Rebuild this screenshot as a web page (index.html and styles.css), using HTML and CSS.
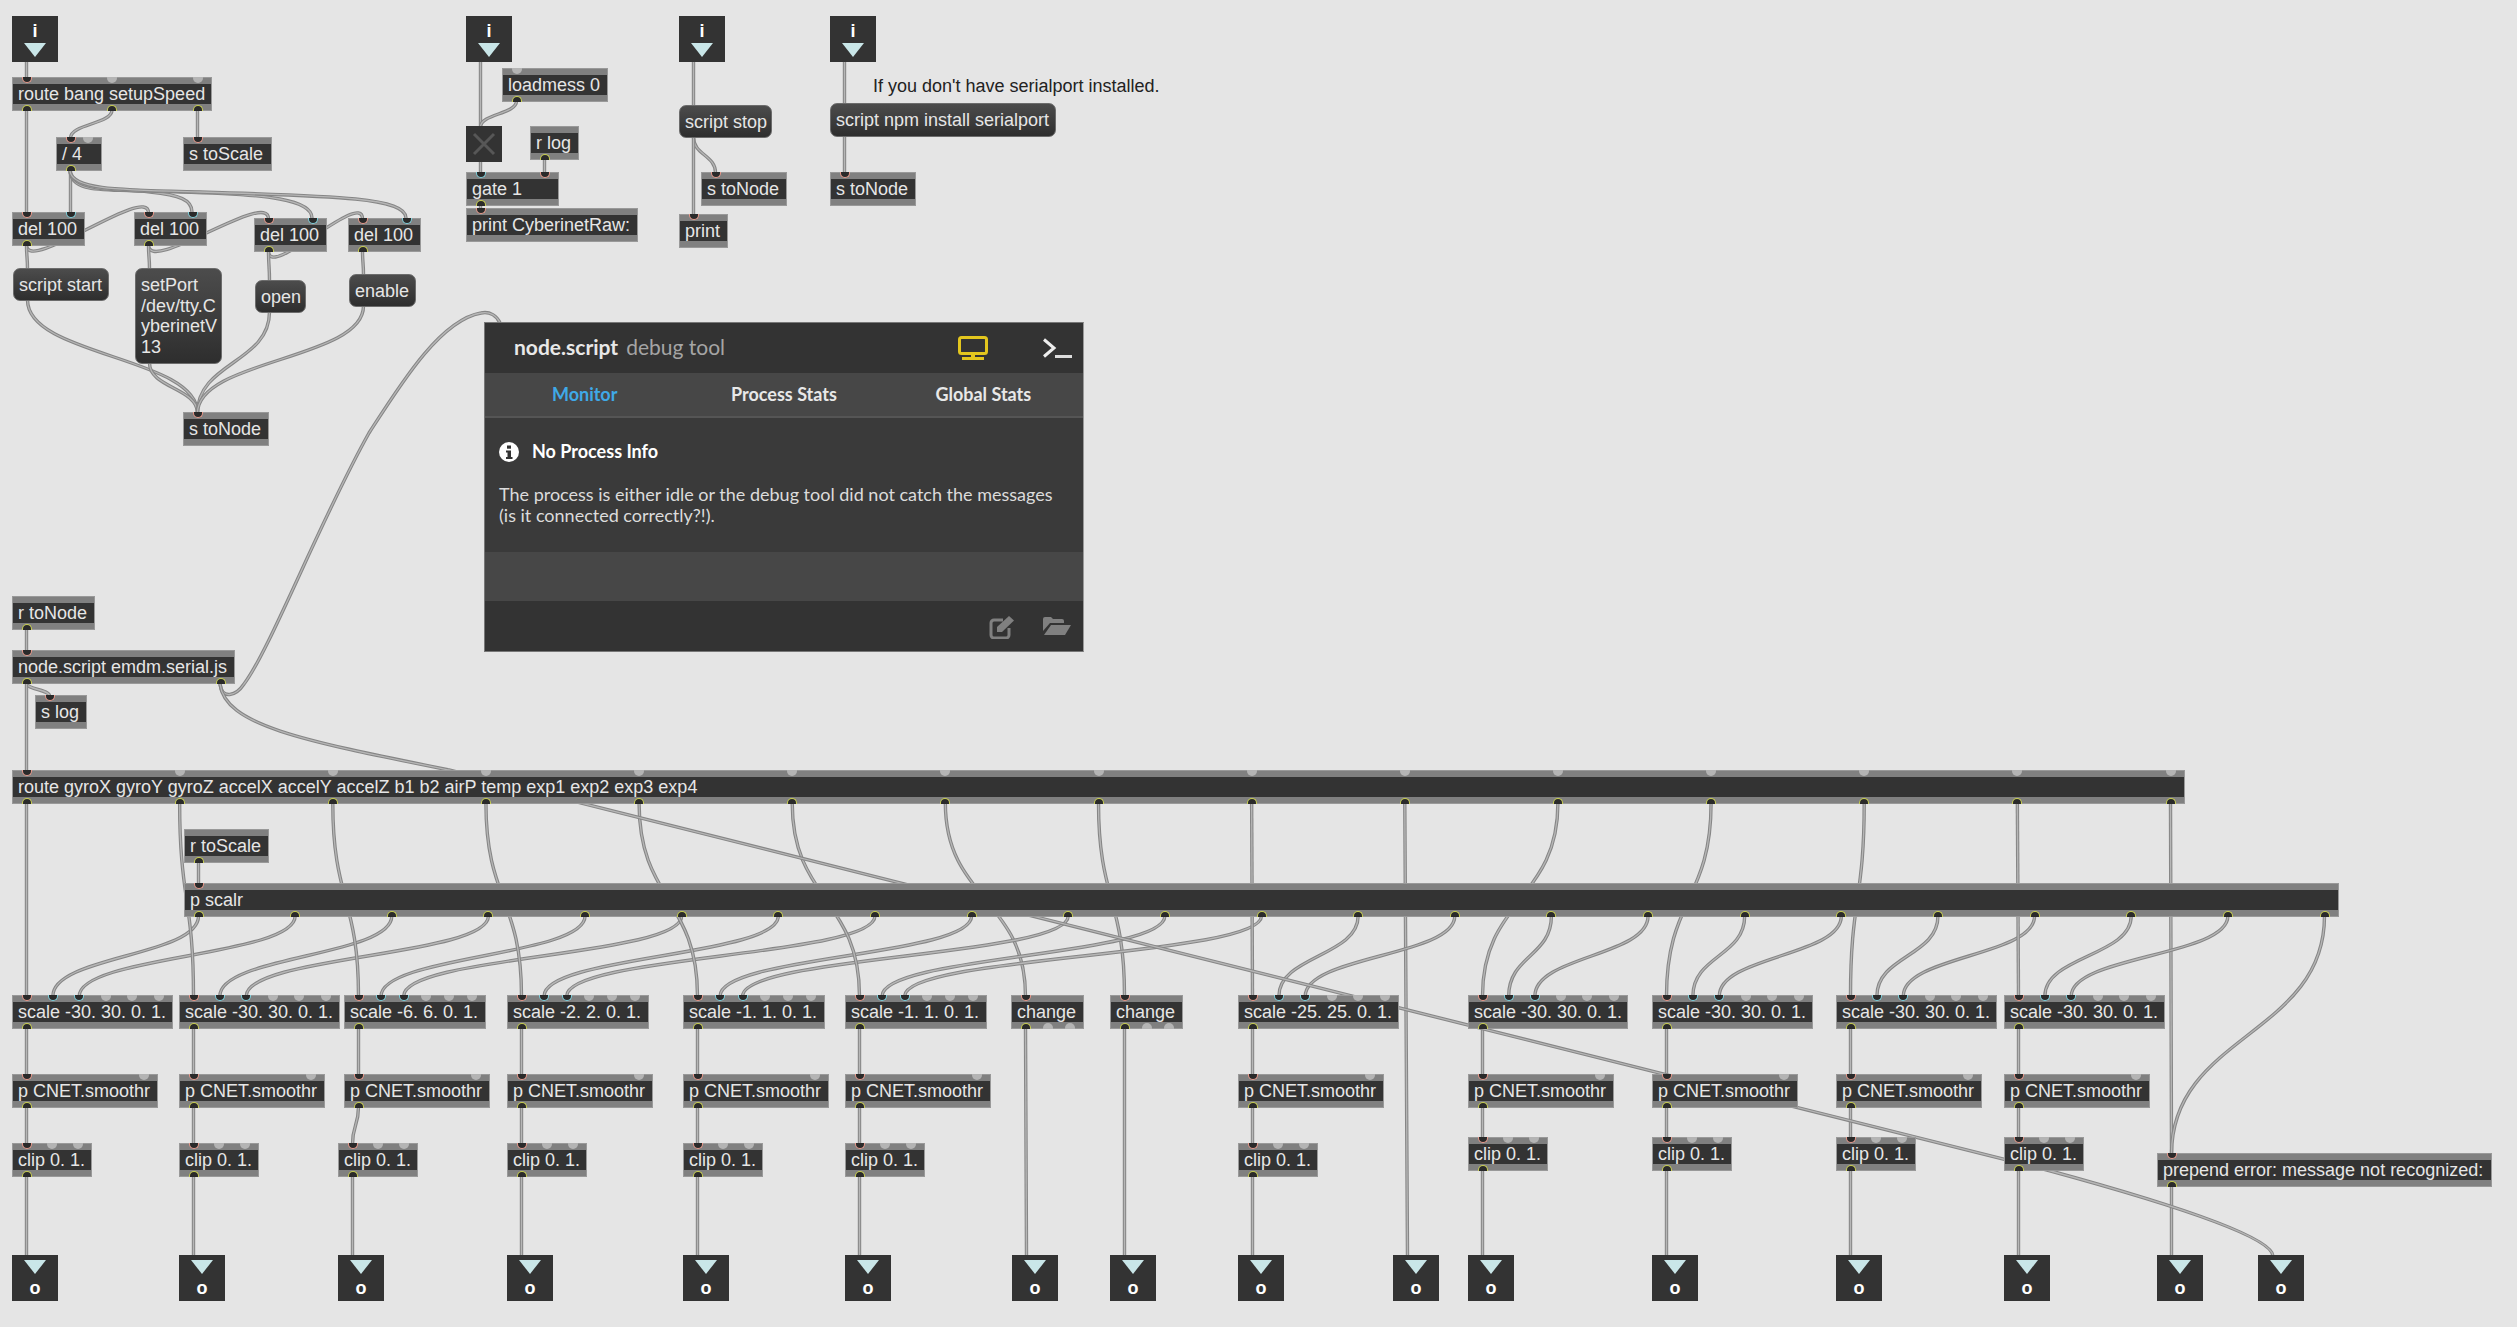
FILE: index.html
```html
<!DOCTYPE html>
<html lang="en">
	<head>
		<meta charset="UTF-8">
		<meta name="viewport" content="width=device-width, initial-scale=1.0">
		<title>CyberinetRaw patcher</title>
		<link rel="stylesheet" href="styles.css">
	</head>

	<body>
		<main id="patcher">
			<svg id="cords" width="2517" height="1327" xmlns="http://www.w3.org/2000/svg"></svg>

			<p class="comment">If you don't have serialport installed.</p>

			<section class="debug">
				<header class="debug-head">
					<strong>node.script</strong>
					<span class="debug-sub">debug tool</span>
					<svg class="icon-monitor" width="30" height="24" viewBox="0 0 30 24">
						<rect x="1.5" y="1.5" width="27" height="16" rx="2" fill="none" stroke="#e3c61e" stroke-width="3"/>
						<rect x="13" y="18" width="4" height="4" fill="#e3c61e"/>
						<rect x="4" y="21" width="22" height="3" fill="#e3c61e"/>
					</svg>
					<svg class="icon-term" width="30" height="20" viewBox="0 0 30 20">
						<path d="M2 1.5 12 10 2 18.5" fill="none" stroke="#eee" stroke-width="3"/>
						<rect x="13" y="17" width="17" height="3" fill="#ddd"/>
					</svg>
				</header>

				<nav class="debug-tabs">
					<a class="active">Monitor</a>
					<a>Process Stats</a>
					<a>Global Stats</a>
				</nav>

				<div class="debug-body">
					<h4>
						<svg width="20" height="20" viewBox="0 0 20 20">
							<circle cx="10" cy="10" r="10" fill="#fff"/>
							<rect x="8" y="3.5" width="4" height="3.2" fill="#333"/>
							<path d="M7 8.5h5v6.500h1.500v2h-6.500v-2h1.500v-4.500h-1.500z" fill="#333"/>
						</svg>
						No Process Info
					</h4>
					<p>The process is either idle or the debug tool did not catch the messages<br>(is it connected correctly?!).</p>
				</div>

				<div class="debug-band"></div>

				<footer class="debug-foot">
					<svg width="28" height="25" viewBox="0 0 28 25">
						<path d="M14 6H5a3 3 0 0 0-3 3v12a3 3 0 0 0 3 3h12a3 3 0 0 0 3-3v-7" fill="none" stroke="#808080" stroke-width="3"/>
						<path d="M8 13 20 2l5 4.500L13 18H8z" fill="#808080"/>
					</svg>
					<svg width="28" height="18" viewBox="0 0 28 18">
						<path d="M0 2a2 2 0 0 1 2-2h6l2 2h9a2 2 0 0 1 2 2v2H7L0 14z" fill="#808080"/>
						<path d="M8 8h20l-6 10H1z" fill="#808080"/>
					</svg>
				</footer>
			</section>
		</main>

		<script src="patcher.js"></script>
	</body>
</html>
```

FILE: styles.css
```css
body {
	padding: 0;
	margin: 0;
	background-color: #e5e5e5;
	overflow: hidden;
}

#patcher {
	position: relative;
	width: 2517px;
	height: 1327px;
	font-family: "Liberation Sans", Arial, sans-serif;
	font-size: 18px;
	color: #e6e6e6;
}

#cords {
	position: absolute;
	left: 0;
	top: 0;
}

.cord-outer {
	fill: none;
	stroke: #868686;
	stroke-width: 3.4;
}

.cord-inner {
	fill: none;
	stroke: #b6b6b6;
	stroke-width: 1.3;
}

/* everything on the canvas is placed from patcher.js */
.obj,
.msg,
.toggle,
.io {
	position: absolute;
	box-sizing: border-box;
}

.obj {
	height: 34px;
	padding: 7px 0;
	background-color: #808080;
	outline: 1px solid #999;
	outline-offset: -1px;
}

.obj span {
	display: block;
	height: 20px;
	padding-left: 6px;
	line-height: 20px;
	background-color: #333;
	white-space: nowrap;
}

.msg {
	padding: 6px 5px;
	line-height: 20.5px;
	white-space: pre;
	background: linear-gradient(#4c4c4c, #2e2e2e);
	border: 1px solid #6c6c6c;
	border-radius: 7px;
}

.port {
	position: absolute;
	width: 10px;
	height: 6px;
	margin-left: -5px;
	box-sizing: border-box;
	background-color: #2a2a2a;
}

.port.hot,
.port.cold,
.port.dim.top {
	top: 0;
	border-radius: 0 0 5px 5px;
}

.port.yellow,
.port.dim.bottom {
	bottom: 0;
	border-radius: 5px 5px 0 0;
}

.port.hot {
	border: 1.5px solid #eb9a8c;
	border-top: 0;
}

.port.cold {
	border: 1.5px solid #7fd2de;
	border-top: 0;
}

.port.yellow {
	border: 1.5px solid #c9cf52;
	border-bottom: 0;
}

.port.dim {
	background-color: #b4b4b4;
}

.io {
	width: 46px;
	height: 46px;
	background-color: #333;
	color: #fff;
	font-weight: bold;
	text-align: center;
}

.io::before {
	content: "";
	position: absolute;
	left: 12px;
	border-left: 11px solid transparent;
	border-right: 11px solid transparent;
	border-top: 14px solid #c9e6e8;
}

.io.in::before {
	top: 27px;
}

.io.in {
	line-height: 30px;
}

.io.out::before {
	top: 5px;
}

.io.out {
	padding-top: 21px;
	line-height: 24px;
}

.toggle {
	width: 36px;
	height: 36px;
	background-color: #333;
}

.toggle svg {
	display: block;
}

.comment {
	position: absolute;
	left: 873px;
	top: 75px;
	margin: 0;
	line-height: 22px;
	color: #222;
}

.debug {
	position: absolute;
	left: 484px;
	top: 322px;
	width: 600px;
	height: 330px;
	display: flex;
	flex-direction: column;
	font-family: Lato, "Liberation Sans", sans-serif;
	background-color: #333;
	border: 1px solid #777;
	border-right-color: #999;
	box-sizing: border-box;
}

.debug-head {
	height: 50px;
	display: flex;
	align-items: center;
	padding-left: 29px;
	padding-bottom: 3px;
	box-sizing: border-box;
	font-size: 21px;
	color: #e8e8e8;
}

.debug-sub {
	margin-left: 8px;
	color: #a5a5a5;
}

.icon-monitor {
	margin-left: auto;
	margin-top: 3px;
}

.icon-term {
	margin-left: 54px;
	margin-right: 11px;
	margin-top: 3px;
}

.debug-tabs {
	height: 45px;
	padding-bottom: 2px;
	display: grid;
	grid-template-columns: repeat(3, 1fr);
	align-items: center;
	text-align: center;
	font-size: 18px;
	font-weight: bold;
	color: #e8e8e8;
	background-color: #474747;
	border-bottom: 2px solid #555;
	box-sizing: border-box;
}

.debug-tabs .active {
	color: #3fa9e8;
}

.debug-body {
	height: 134px;
	padding: 21px 14px 0;
	box-sizing: border-box;
	background-color: #3a3a3a;
	font-size: 18px;
}

.debug-body h4 {
	display: flex;
	align-items: center;
	gap: 13px;
	margin: 0;
	height: 24px;
	font-size: 18px;
	color: #fff;
}

.debug-body h4 svg {
	margin-top: 2px;
}

.debug-body p {
	margin: 21px 0 0;
	line-height: 21px;
	color: #dcdcdc;
}

.debug-band {
	height: 49px;
	background-color: #474747;
}

.debug-foot {
	flex: 1;
	display: flex;
	align-items: center;
	justify-content: flex-end;
	gap: 26px;
	padding-right: 12px;
}
```

FILE: patcher.js
```js
// port codes: h = hot inlet, c = cold inlet, y = outlet, d = unused, . = no drawn port
const PORT_INSET = 14.5;

let nodes = {
	i1: { kind: "in", x: 12, y: 16, outs: "." },
	route0: { x: 12, y: 77, w: 200, text: "route bang setupSpeed", ins: "hdd", outs: "yyy" },
	div: { x: 56, y: 137, w: 46, text: "/ 4", ins: "hd", outs: "y" },
	toScaleS: { x: 183, y: 137, w: 89, text: "s toScale", ins: "h" },
	delA: { x: 12, y: 212, w: 73, text: "del 100", ins: "hc", outs: "y" },
	delB: { x: 134, y: 212, w: 73, text: "del 100", ins: "hc", outs: "y" },
	delC: { x: 254, y: 218, w: 73, text: "del 100", ins: "hc", outs: "y" },
	delD: { x: 348, y: 218, w: 73, text: "del 100", ins: "hc", outs: "y" },
	mStart: { kind: "msg", x: 13, y: 268, w: 96, h: 33, text: "script start", ins: ".", outs: "." },
	mPort: { kind: "msg", x: 135, y: 268, w: 87, h: 96, text: "setPort\n/dev/tty.C\nyberinetV\n13", ins: ".", outs: "." },
	mOpen: { kind: "msg", x: 255, y: 280, w: 51, h: 33, text: "open", ins: ".", outs: "." },
	mEnable: { kind: "msg", x: 349, y: 274, w: 67, h: 33, text: "enable", ins: ".", outs: "." },
	sNode1: { x: 183, y: 412, w: 86, text: "s toNode", ins: "h" },

	i2: { kind: "in", x: 466, y: 16, outs: "." },
	loadmess: { x: 502, y: 68, w: 106, text: "loadmess 0", ins: "d", outs: "y" },
	toggle: { kind: "toggle", x: 466, y: 126, w: 36, ins: ".", outs: "." },
	rLog: { x: 530, y: 126, w: 49, text: "r log", outs: "y" },
	gate: { x: 466, y: 172, w: 93, text: "gate 1", ins: "ch", outs: "y" },
	printRaw: { x: 466, y: 208, w: 172, text: "print CyberinetRaw:", ins: "h" },

	i3: { kind: "in", x: 679, y: 16, outs: "." },
	mStop: { kind: "msg", x: 679, y: 105, w: 93, h: 33, text: "script stop", ins: ".", outs: "." },
	sNode2: { x: 701, y: 172, w: 86, text: "s toNode", ins: "h" },
	print: { x: 679, y: 214, w: 49, text: "print", ins: "h" },

	i4: { kind: "in", x: 830, y: 16, outs: "." },
	mNpm: { kind: "msg", x: 830, y: 103, w: 226, h: 34, text: "script npm install serialport", ins: ".", outs: "." },
	sNode3: { x: 830, y: 172, w: 86, text: "s toNode", ins: "h" },

	rNode: { x: 12, y: 596, w: 83, text: "r toNode", outs: "y" },
	script: { x: 12, y: 650, w: 223, text: "node.script emdm.serial.js", ins: "h", outs: "yy" },
	sLog: { x: 35, y: 695, w: 52, text: "s log", ins: "h" },
	route: { x: 12, y: 770, w: 2173, text: "route gyroX gyroY gyroZ accelX accelY accelZ b1 b2 airP temp exp1 exp2 exp3 exp4", ins: "h" + "d".repeat(14), outs: "y".repeat(15) },
	rScale: { x: 184, y: 829, w: 85, text: "r toScale", outs: "y" },
	scalr: { x: 184, y: 883, w: 2155, text: "p scalr", ins: "h", outs: "y".repeat(23) },

	prepend: { x: 2157, y: 1153, w: 335, text: "prepend error: message not recognized:", ins: "h", outs: "y" },
	changeA: { x: 1011, y: 995, w: 73, text: "change", ins: "h", outs: "ydd" },
	changeB: { x: 1110, y: 995, w: 73, text: "change", ins: "h", outs: "ydd" },
	outChangeA: { kind: "out", x: 1012, y: 1255, ins: "." },
	outChangeB: { kind: "out", x: 1110, y: 1255, ins: "." },
	outRaw: { kind: "out", x: 1393, y: 1255, ins: "." },
	outPrepend: { kind: "out", x: 2157, y: 1255, ins: "." },
	outLast: { kind: "out", x: 2258, y: 1255, ins: "." },
};

// one channel: scale > p CNET.smoothr > clip > number out
let channels = [
	{ x: 12, w: 161, text: "scale -30. 30. 0. 1." },
	{ x: 179, w: 161, text: "scale -30. 30. 0. 1." },
	{ x: 344, w: 142, text: "scale -6. 6. 0. 1.", clipX: 338 },
	{ x: 507, w: 142, text: "scale -2. 2. 0. 1." },
	{ x: 683, w: 142, text: "scale -1. 1. 0. 1." },
	{ x: 845, w: 142, text: "scale -1. 1. 0. 1." },
	{ x: 1238, w: 161, text: "scale -25. 25. 0. 1." },
	{ x: 1468, w: 160, text: "scale -30. 30. 0. 1.", clipY: 1137 },
	{ x: 1652, w: 161, text: "scale -30. 30. 0. 1.", clipY: 1137 },
	{ x: 1836, w: 161, text: "scale -30. 30. 0. 1.", clipY: 1137 },
	{ x: 2004, w: 161, text: "scale -30. 30. 0. 1.", clipY: 1137 },
];

let wires = [
	["i1", 0, "route0", 0], ["route0", 0, "delA", 0], ["route0", 1, "div", 0], ["route0", 2, "toScaleS", 0],
	["div", 0, "delA", 1],
	["delA", 0, "delB", 0], ["delB", 0, "delC", 0], ["delC", 0, "delD", 0],
	["delA", 0, "mStart", 0], ["delB", 0, "mPort", 0], ["delC", 0, "mOpen", 0], ["delD", 0, "mEnable", 0],
	["mStart", 0, "sNode1", 0], ["mPort", 0, "sNode1", 0], ["mOpen", 0, "sNode1", 0], ["mEnable", 0, "sNode1", 0],
	["i2", 0, "toggle", 0], ["loadmess", 0, "toggle", 0], ["toggle", 0, "gate", 0], ["rLog", 0, "gate", 1], ["gate", 0, "printRaw", 0],
	["i3", 0, "mStop", 0], ["mStop", 0, "sNode2", 0], ["mStop", 0, "print", 0],
	["i4", 0, "mNpm", 0], ["mNpm", 0, "sNode3", 0],
	["rNode", 0, "script", 0], ["script", 0, "sLog", 0], ["script", 0, "route", 0], ["rScale", 0, "scalr", 0],
	["route", 6, "changeA", 0], ["route", 7, "changeB", 0], ["route", 9, "outRaw", 0], ["route", 14, "prepend", 0],
	["scalr", 22, "prepend", 0], ["prepend", 0, "outPrepend", 0],
	["changeA", 0, "outChangeA", 0], ["changeB", 0, "outChangeB", 0],
];

// the fan out of "/ 4" and the two long cords from node.script don't follow the usual bend
let freeCords = [
	"M70,171 C72,195 110,188 150,192 C180,195 192,200 192,212",
	"M70,171 C72,192 120,190 180,192 C270,194 312,200 312,218",
	"M70,171 C72,190 120,190 200,192 C340,196 406,198 406,218",
	"M220,684 C222,700 236,696 244,684 C270,650 320,520 369,433 C400,385 440,320 481,313 C490,311 497,316 500,323",
	"M220,684 C225,725 300,740 449,770 L2047,1170 C2150,1198 2272,1235 2273,1256",
];

let routeOuts = [0, 1, 2, 3, 4, 5, 8, 10, 11, 12, 13];

channels.forEach((ch, n) => {
	let outX = ch.clipX || ch.x;
	nodes["sc" + n] = { x: ch.x, y: 995, w: ch.w, text: ch.text, ins: "hccddd", outs: "y" };
	nodes["sm" + n] = { x: ch.x, y: 1074, w: 146, text: "p CNET.smoothr", ins: "hd", outs: "y" };
	nodes["cl" + n] = { x: outX, y: ch.clipY || 1143, w: 80, text: "clip 0. 1.", ins: "hdd", outs: "y" };
	nodes["nb" + n] = { kind: "out", x: outX, y: 1255, ins: "." };

	wires.push(["route", routeOuts[n], "sc" + n, 0]);
	wires.push(["scalr", n * 2, "sc" + n, 1]);
	wires.push(["scalr", n * 2 + 1, "sc" + n, 2]);
	wires.push(["sc" + n, 0, "sm" + n, 0]);
	wires.push(["sm" + n, 0, "cl" + n, 0]);
	wires.push(["cl" + n, 0, "nb" + n, 0]);
});

function size(node) {
	if (node.kind === "in" || node.kind === "out") return { w: 46, h: 46 };
	if (node.kind === "toggle") return { w: 36, h: 36 };
	return { w: node.w, h: node.h || 34 };
}

function portX(node, index, count) {
	let w = size(node).w;
	if (count < 2) return node.x + PORT_INSET;
	return node.x + PORT_INSET + index * (w - PORT_INSET * 2) / (count - 1);
}

let patcher = document.querySelector("#patcher");
let cords = document.querySelector("#cords");
let debugPanel = document.querySelector(".debug");

function addCord(d) {
	["cord-outer", "cord-inner"].forEach((cls) => {
		let path = document.createElementNS("http://www.w3.org/2000/svg", "path");
		path.setAttribute("d", d);
		path.setAttribute("class", cls);
		cords.appendChild(path);
	});
}

wires.forEach(([from, outlet, to, inlet]) => {
	let a = nodes[from];
	let b = nodes[to];
	let x1 = portX(a, outlet, a.outs.length);
	let y1 = a.y + size(a).h - 1;
	let x2 = portX(b, inlet, b.ins.length);
	let y2 = b.y + 1;
	// going back up needs a loop, going down just a soft bend
	let k = y2 > y1 ? (y2 - y1) * 0.5 : 30;
	addCord(`M${x1},${y1} C${x1},${y1 + k} ${x2},${y2 - k} ${x2},${y2}`);
});

freeCords.forEach(addCord);

function addPorts(el, node, codes, top) {
	[...codes].forEach((code, i) => {
		if (code === ".") return;
		let port = document.createElement("i");
		let names = { h: "hot", c: "cold", y: "yellow", d: "dim " + (top ? "top" : "bottom") };
		port.className = "port " + names[code];
		port.style.left = (portX(node, i, codes.length) - node.x) + "px";
		el.appendChild(port);
	});
}

Object.values(nodes).forEach((node) => {
	let el = document.createElement("div");
	let kind = node.kind || "obj";
	el.style.left = node.x + "px";
	el.style.top = node.y + "px";

	if (kind === "in" || kind === "out") {
		el.className = "io " + kind;
		el.textContent = kind === "in" ? "i" : "o";
	} else if (kind === "toggle") {
		el.className = "toggle";
		el.innerHTML = '<svg width="36" height="36" viewBox="0 0 36 36"><path d="M8 8 28 28M28 8 8 28" stroke="#575757" stroke-width="3"/></svg>';
	} else if (kind === "msg") {
		el.className = "msg";
		el.style.width = node.w + "px";
		el.style.height = node.h + "px";
		el.textContent = node.text;
	} else {
		el.className = "obj";
		el.style.width = node.w + "px";
		let label = document.createElement("span");
		label.textContent = node.text;
		el.appendChild(label);
		addPorts(el, node, node.ins || "", true);
		addPorts(el, node, node.outs || "", false);
	}

	patcher.insertBefore(el, debugPanel);
});
```
